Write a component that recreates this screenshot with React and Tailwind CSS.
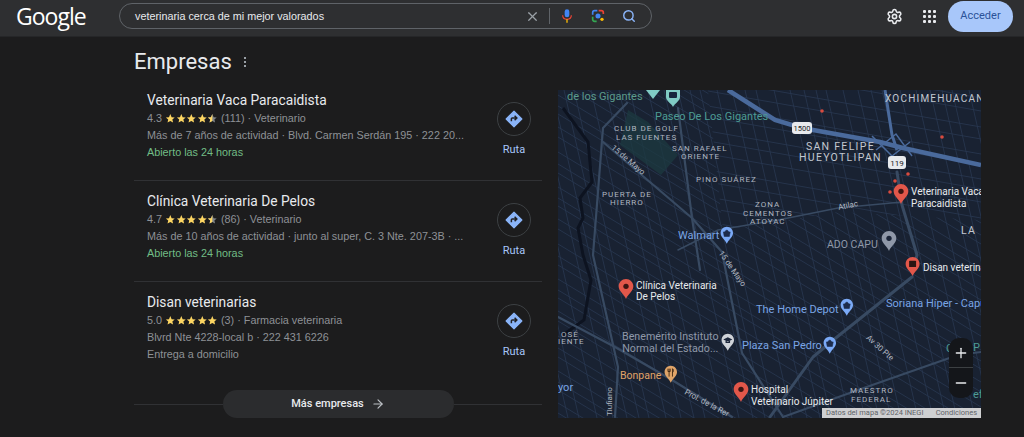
import React from "react";
import { ArrowRight, Search, Settings, X, Plus, Minus } from "lucide-react";

const businesses = [
  {
    name: "Veterinaria Vaca Paracaidista",
    rating: "4.3",
    half: true,
    reviews: "(111)",
    kind: "Veterinario",
    info: "Más de 7 años de actividad · Blvd. Carmen Serdán 195 · 222 20...",
    extra: "Abierto las 24 horas",
    open: true,
  },
  {
    name: "Clínica Veterinaria De Pelos",
    rating: "4.7",
    half: true,
    reviews: "(86)",
    kind: "Veterinario",
    info: "Más de 10 años de actividad · junto al super, C. 3 Nte. 207-3B · ...",
    extra: "Abierto las 24 horas",
    open: true,
  },
  {
    name: "Disan veterinarias",
    rating: "5.0",
    half: false,
    reviews: "(3)",
    kind: "Farmacia veterinaria",
    info: "Blvrd Nte 4228-local b · 222 431 6226",
    extra: "Entrega a domicilio",
    open: false,
  },
];

const STAR = "12,2 15,8.9 22,9.5 16.7,14.1 18.3,21 12,17.4 5.7,21 7.3,14.1 2,9.5 9,8.9";
const HALF_STAR = "12,2 12,17.4 5.7,21 7.3,14.1 2,9.5 9,8.9";

function Stars({ half }) {
  return (
    <span className="flex w-[53px] shrink-0">
      {[0, 1, 2, 3, 4].map((i) => (
        <svg key={i} viewBox="0 0 24 24" className="h-[11px] w-[10.6px]">
          <polygon points={STAR} fill={half && i === 4 ? "#80868b" : "#fdd663"} />
          {half && i === 4 && <polygon points={HALF_STAR} fill="#fdd663" />}
        </svg>
      ))}
    </span>
  );
}

function RouteButton() {
  return (
    <div className="flex w-[62px] shrink-0 flex-col items-center">
      <div className="flex h-[34px] w-[34px] items-center justify-center rounded-full border border-[#3c4043]">
        <svg viewBox="0 0 24 24" className="h-[18px] w-[18px]">
          <path d="M12 1.5 22.5 12 12 22.5 1.5 12Z" fill="#8ab4f8" stroke="#8ab4f8" strokeWidth="1.5" strokeLinejoin="round" />
          <path d="M8.5 15v-3.2c0-.7.5-1.2 1.2-1.2h5.3M12.8 7.6l3 3-3 3" fill="none" stroke="#202124" strokeWidth="2" />
        </svg>
      </div>
      <span className="mt-[7px] text-[11px] leading-[14px] font-['Roboto',sans-serif] text-[#a8c7fa]">Ruta</span>
    </div>
  );
}

function BusinessRow({ item, last }) {
  return (
    <div className={last ? "flex h-[108px] pl-[13px] pt-[10px]" : "flex h-[101px] border-b border-[#303134] pl-[13px] pt-[10px]"}>
      <div className="w-[336px] shrink-0">
        <div className="h-5 text-[13.75px] leading-5 font-['Roboto',sans-serif] text-[#e8eaed]">{item.name}</div>
        <div className="flex h-[17px] items-center gap-[3px] text-[10.8px] text-[#8e9196]">
          <span>{item.rating}</span>
          <Stars half={item.half} />
          <span>{item.reviews} · {item.kind}</span>
        </div>
        <div className="h-[17px] whitespace-nowrap text-[10.8px] leading-[17px] text-[#8e9196]">{item.info}</div>
        <div className={item.open ? "h-[17px] text-[10.8px] leading-[17px] text-[#72bd86]" : "h-[17px] text-[10.8px] leading-[17px] text-[#8e9196]"}>{item.extra}</div>
      </div>
      <div className="pt-[12px]">
        <RouteButton />
      </div>
    </div>
  );
}

function Pin({ x, y, color = "#e2574a", dot = "#3c1512", size = 1, children }) {
  return (
    <svg viewBox="0 0 24 32" style={{ left: x - 8 * size, top: y - 22 * size }} width={16 * size} height={22 * size} className="absolute">
      <path d="M12 1C5.9 1 1 5.9 1 12c0 7.6 8.4 12.3 11 19 2.6-6.7 11-11.4 11-19C23 5.9 18.1 1 12 1Z" fill={color} />
      {children || <circle cx="12" cy="12" r="4" fill={dot} />}
    </svg>
  );
}

const bag = <path d="M6 10h12l-1.500 8h-9ZM9 10c0-4 6-4 6 0" fill="#1d2c4d" stroke="#1d2c4d" />;
const fork = <path d="M9 6v14M7 6v5h4V6M15 6v14M15 6c2 1 2.500 5 0 7" fill="none" stroke="#3a2410" strokeWidth="1.500" />;
const cap = <path d="M4 11l8-4 8 4-8 4ZM8 13.500v3.500h8v-3.500" fill="#1b2539" />;
const shop = <rect x="6.500" y="7" width="11" height="10" rx="1" fill="#2b1512" />;

const labelBase = "absolute whitespace-nowrap font-['Roboto',sans-serif]";

// zones, in the map's own coordinates
const zones = [
  ["CLUB DE GOLF", 56, 34], ["LAS FUENTES", 58, 43],
  ["SAN RAFAEL", 114, 54], ["ORIENTE", 123, 62],
  ["PINO SUÁREZ", 138, 85],
  ["PUERTA DE", 44, 100], ["HIERRO", 52, 108],
  ["ZONA", 197, 110], ["CEMENTOS", 185, 119], ["ATOYAC", 192, 127],
  ["MAESTRO", 292, 296], ["FEDERAL", 293, 305],
  ["OSÉ", 3, 240], ["IENTE", 0, 247],
];

function MapLabel({ text, x, y, className, lines }) {
  return (
    <span style={{ left: x, top: y }} className={`${labelBase} ${className}`}>
      {lines ? lines.map((l) => <span key={l} className="block">{l}</span>) : text}
    </span>
  );
}

// minor streets: uneven spacing so they do not read as a plain hatch
function Streets() {
  const steep = [];
  const southEast = [];
  const shallow = [];
  let a = -120;
  for (let i = 0; a < 480; i++) {
    steep.push(<path key={i} d={`M${a} 0 L${a + 75} 328`} />);
    a += 10 + ((i * 7) % 9);
  }
  let b = -260;
  for (let i = 0; b < 330; i++) {
    southEast.push(<path key={i} d={`M0 ${b} L423 ${b + 255}`} />);
    b += 8 + ((i * 5) % 8);
  }
  let c = -50;
  for (let i = 0; c < 150; i++) {
    shallow.push(<path key={i} d={`M150 ${c} L423 ${c + 48}`} />);
    c += 10 + ((i * 3) % 7);
  }
  return (
    <g stroke="#2a3952" strokeWidth="0.8" fill="none">
      <defs>
        <clipPath id="lower-streets">
          <path d="M0 0H150L165 140 280 122 423 130V328H0Z" />
        </clipPath>
        <clipPath id="upper-streets">
          <path d="M150 0H423V130L280 122 165 140Z" />
        </clipPath>
      </defs>
      {steep}
      <g clipPath="url(#lower-streets)">{southEast}</g>
      <g clipPath="url(#upper-streets)">{shallow}</g>
    </g>
  );
}

function BusinessMap() {
  return (
    <div className="relative mt-[10px] h-[328px] w-[423px] shrink-0 overflow-hidden bg-[#192232]">
      <svg viewBox="0 0 423 328" className="absolute inset-0 h-full w-full">
        <Streets />
        <path d="M70 20 90 32 120 65 103 85 62 55Z" fill="#1c3a40" opacity="0.75" />
        <path d="M5 18 30 52 34 92 22 108 25 128 20 138 25 165 33 190 26 230 5 245" fill="none" stroke="#0d1320" strokeWidth="3" />
        <g fill="none" stroke="#384a62" strokeLinejoin="round" strokeLinecap="round">
          <path d="M69 13 45 38 35 165 60 277 57 327" strokeWidth="2.200" />
          <path d="M45 52 134 128 164 162 184 263 225 327" strokeWidth="2.200" />
          <path d="M120 18 134 128 142 180" strokeWidth="2.200" />
          <path d="M0 227 57 257 114 290 174 327" strokeWidth="2.200" />
          <path d="M339 82 344 115 359 165 355 180" strokeWidth="3" />
          <path d="M354 187 279 247 255 267 212 327" strokeWidth="3" />
          <path d="M344 112 280 118 220 130 160 140 120 160" strokeWidth="1.500" />
          <path d="M225 327 300 300 400 265 423 262" strokeWidth="2" />
        </g>
        <path d="M327 0 334 45 339 60" fill="none" stroke="#4a6a9c" strokeWidth="3" />
        <path d="M170 0 217 30 244 38 322 52 345 58 423 75" fill="none" stroke="#4a6a9c" strokeWidth="4.500" />
        <path d="M314 46 334 66 352 52M318 60 338 44 354 66" fill="none" stroke="#4a6a9c" strokeWidth="1.500" />
        <g fill="#d94b3f">
          <circle cx="264" cy="21" r="1.800" />
          <circle cx="384" cy="47" r="1.800" />
          <circle cx="337" cy="91" r="1.800" />
          <circle cx="350" cy="84" r="1.800" />
          <circle cx="332" cy="102" r="1.800" />
        </g>
        <path d="M88 0 102 0 95 9Z" fill="#80cbc4" />
        <path d="M108 0h14v7c0 4-5 6-7 10-2-4-7-6-7-10Z" fill="#80cbc4" />
        <rect x="111" y="2" width="8" height="6" rx="1" fill="#17263c" />
        <rect x="234" y="32" width="20" height="12" rx="3" fill="#e8eaed" />
        <rect x="330" y="66" width="18" height="13" rx="3" fill="#e8eaed" />
        <text x="244" y="41" fontSize="7.500" textAnchor="middle" fill="#202124" fontFamily="Roboto">1500</text>
        <text x="339" y="76" fontSize="8" textAnchor="middle" fill="#202124" fontFamily="Roboto">119</text>
      </svg>

      <MapLabel text="de los Gigantes" x={9} y={-1} className="text-[11px] text-[#5c9c8c]" />
      <MapLabel text="Paseo De Los Gigantes" x={97} y={19} className="text-[11px] text-[#4d9c94]" />
      <MapLabel text="Walmart" x={120} y={138} className="text-[11px] text-[#7aa5e5]" />
      <MapLabel text="The Home Depot" x={198} y={212} className="text-[11px] text-[#7aa5e5]" />
      <MapLabel text="Soriana Híper - Capu" x={328} y={206} className="text-[11px] text-[#7aa5e5]" />
      <MapLabel text="Plaza San Pedro" x={184} y={248} className="text-[11px] text-[#7aa5e5]" />
      <MapLabel text="yor" x={0} y={290} className="text-[11px] text-[#7aa5e5]" />
      <MapLabel text="C" x={388} y={251} className="text-[11px] text-[#4d9c94]" />
      <MapLabel text="P" x={415} y={250} className="text-[11px] text-[#4d9c94]" />
      <MapLabel text="ef" x={415} y={297} className="text-[11px] text-[#4d9c94]" />
      <MapLabel text="ADO CAPU" x={269} y={147} className="text-[10.500px] text-[#8f98a8]" />
      <MapLabel text="Bonpane" x={62} y={278} className="text-[10.500px] text-[#e0a468]" />
      <MapLabel lines={["Benemérito Instituto", "Normal del Estado..."]} x={64} y={241} className="text-center text-[10.700px] leading-[12px] text-[#8f98a8]" />
      <MapLabel lines={["SAN FELIPE", "HUEYOTLIPAN"]} x={241} y={51} className="text-center text-[10.500px] leading-[11px] tracking-[1.300px] text-[#c3c8d0]" />
      <MapLabel text="XOCHIMEHUACAN" x={327} y={1} className="text-[10px] tracking-[1.200px] text-[#c3c8d0]" />
      <MapLabel text="LA" x={403} y={133} className="text-[10.500px] tracking-[1.200px] text-[#c3c8d0]" />

      {zones.map(([t, x, y]) => (
        <MapLabel key={t} text={t} x={x} y={y} className="text-[8px] leading-[9px] tracking-[1px] text-[#b0b6c0]" />
      ))}

      <MapLabel lines={["Veterinaria Vaca", "Paracaidista"]} x={353} y={96} className="text-[10px] leading-[12px] text-[#e8eaed]" />
      <MapLabel lines={["Clínica Veterinaria", "De Pelos"]} x={78} y={190} className="text-[10px] leading-[11px] text-[#e8eaed]" />
      <MapLabel text="Disan veterinarias" x={365} y={172} className="text-[10px] leading-[12px] text-[#e8eaed]" />
      <MapLabel lines={["Hospital", "Veterinario Júpiter"]} x={193} y={294} className="text-[10px] leading-[12px] text-[#e8eaed]" />

      <MapLabel text="15 de Mayo" x={54} y={51} className="origin-left rotate-[40deg] text-[8px] text-[#b0b6c0]" />
      <MapLabel text="15 de Mayo" x={162} y={156} className="origin-left rotate-[55deg] text-[8px] text-[#b0b6c0]" />
      <MapLabel text="Atilac" x={280} y={110} className="-rotate-[12deg] text-[8px] text-[#b0b6c0]" />
      <MapLabel text="Av 30 Pte" x={309} y={241} className="origin-left rotate-[42deg] text-[8px] text-[#b0b6c0]" />
      <MapLabel text="Prol. de la Rer" x={127} y={296} className="origin-left rotate-[28deg] text-[8px] text-[#b0b6c0]" />
      <MapLabel text="Tlufiano" x={52} y={320} className="origin-left -rotate-90 text-[8px] text-[#b0b6c0]" />

      <Pin x={343} y={115} />
      <Pin x={68} y={210} />
      <Pin x={183} y={313} />
      <Pin x={355} y={187} size={0.95}>{shop}</Pin>
      <Pin x={331} y={162} color="#8f98a8" dot="#1b2539" />
      <Pin x={169} y={155} color="#7baaf7" size={0.85}>{bag}</Pin>
      <Pin x={289} y={227} color="#7baaf7" size={0.85}>{bag}</Pin>
      <Pin x={272} y={265} color="#7baaf7" size={0.85}>{bag}</Pin>
      <Pin x={170} y={262} color="#cfd3d8" size={0.85}>{cap}</Pin>
      <Pin x={113} y={294} color="#e0a468" size={0.85}>{fork}</Pin>

      <div className="absolute bottom-[20px] right-[8px] flex w-6 flex-col overflow-hidden rounded-[10px] bg-[#14161a] text-[#e8eaed]">
        <div className="flex h-[30px] items-center justify-center border-b border-[#3c4043]"><Plus size={16} /></div>
        <div className="flex h-[30px] items-center justify-center"><Minus size={16} /></div>
      </div>
      <div className="absolute bottom-0 right-0 flex h-[10px] w-[159px] items-center justify-between bg-[#cfd0d2] px-[4px] text-[7.500px] leading-[10px] font-['Roboto',sans-serif] text-[#5f6368]">
        <span>Datos del mapa ©2024 INEGI</span>
        <span>Condiciones</span>
      </div>
    </div>
  );
}

export default function App() {
  return (
    <div className="h-[437px] w-[1024px] overflow-hidden bg-[#1c1c1d] font-['Liberation_Sans',Arial,sans-serif]">
      <header className="flex h-[36px] items-center bg-[#2e2f31] pb-1 pl-4 shadow-[0_1px_0_#252628]">
        <div className="w-[103px] shrink-0 font-['Open_Sans',sans-serif] text-[23px] leading-none tracking-[-1px] text-white">Google</div>
        <div className="flex h-[26px] w-[533px] shrink-0 items-center rounded-full border border-[#5f6368] pl-[15px] pr-[15px]">
          <span className="flex-1 text-[10.8px] text-[#e8eaed]">veterinaria cerca de mi mejor valorados</span>
          <X size={15} className="text-[#9aa0a6]" />
          <span className="mx-[9px] h-[16px] w-px bg-[#5f6368]" />
          <svg viewBox="0 0 24 24" className="h-[16px] w-[16px]">
            <rect x="8.500" y="2" width="7" height="12" rx="3.500" fill="#4285f4" />
            <path d="M5.500 11c0 3.500 2.800 6 6.500 6s6.500-2.500 6.500-6" fill="none" stroke="#ea4335" strokeWidth="1.800" />
            <path d="M12 17v5" stroke="#fbbc04" strokeWidth="2" />
          </svg>
          <svg viewBox="0 0 24 24" className="ml-[15px] h-[16px] w-[16px]">
            <circle cx="12" cy="12" r="3.800" fill="#4285f4" />
            <path d="M4 10V7a3 3 0 0 1 3-3h4" fill="none" stroke="#4285f4" strokeWidth="2.500" />
            <path d="M13 4h4a3 3 0 0 1 3 3v2" fill="none" stroke="#ea4335" strokeWidth="2.500" />
            <path d="M4 13v4a3 3 0 0 0 3 3h3" fill="none" stroke="#34a853" strokeWidth="2.500" />
            <circle cx="18" cy="17" r="2.500" fill="#fbbc04" />
          </svg>
          <Search size={14} strokeWidth={2.500} className="ml-[16px] text-[#8ab4f8]" />
        </div>
        <Settings size={17} strokeWidth={2.200} className="ml-[234px] text-[#e8eaed]" />
        <div className="ml-[20px] grid grid-cols-3 gap-[2px]">
          {[0, 1, 2, 3, 4, 5, 6, 7, 8].map((i) => (
            <span key={i} className="h-[3px] w-[3px] rounded-[1px] bg-[#e8eaed]" />
          ))}
        </div>
        <div className="ml-[12px] flex h-[31px] w-[65px] items-center justify-center rounded-full bg-[#a8c7fa] text-[11px] font-['Roboto',sans-serif] text-[#2a5298]">Acceder</div>
      </header>

      <main className="pl-[134px]">
        <div className="flex h-[44px] items-start pt-[15px]">
          <h2 className="text-[22px] leading-[22px] font-['Roboto',sans-serif] text-[#e8eaed]">Empresas</h2>
          <div className="ml-[12px] mt-[6px] flex flex-col gap-[2px]">
            <span className="h-[2px] w-[2px] bg-[#9aa0a6]" />
            <span className="h-[2px] w-[2px] bg-[#9aa0a6]" />
            <span className="h-[2px] w-[2px] bg-[#9aa0a6]" />
          </div>
        </div>
        <div className="flex gap-4">
          <div className="w-[408px] shrink-0">
            {businesses.map((item, idx) => (
              <BusinessRow key={item.name} item={item} last={idx === businesses.length - 1} />
            ))}
            <div className="flex items-center">
              <div className="h-px flex-1 bg-[#303134]" />
              <div className="flex h-[28px] w-[231px] items-center justify-center gap-[7px] rounded-full bg-[#2b2c2e] text-[11px] font-['Roboto',sans-serif] font-medium text-[#e8eaed]">
                Más empresas
                <ArrowRight size={14} className="text-[#bdc1c6]" />
              </div>
              <div className="h-px flex-1 bg-[#303134]" />
            </div>
          </div>
          <BusinessMap />
        </div>
      </main>
    </div>
  );
}
